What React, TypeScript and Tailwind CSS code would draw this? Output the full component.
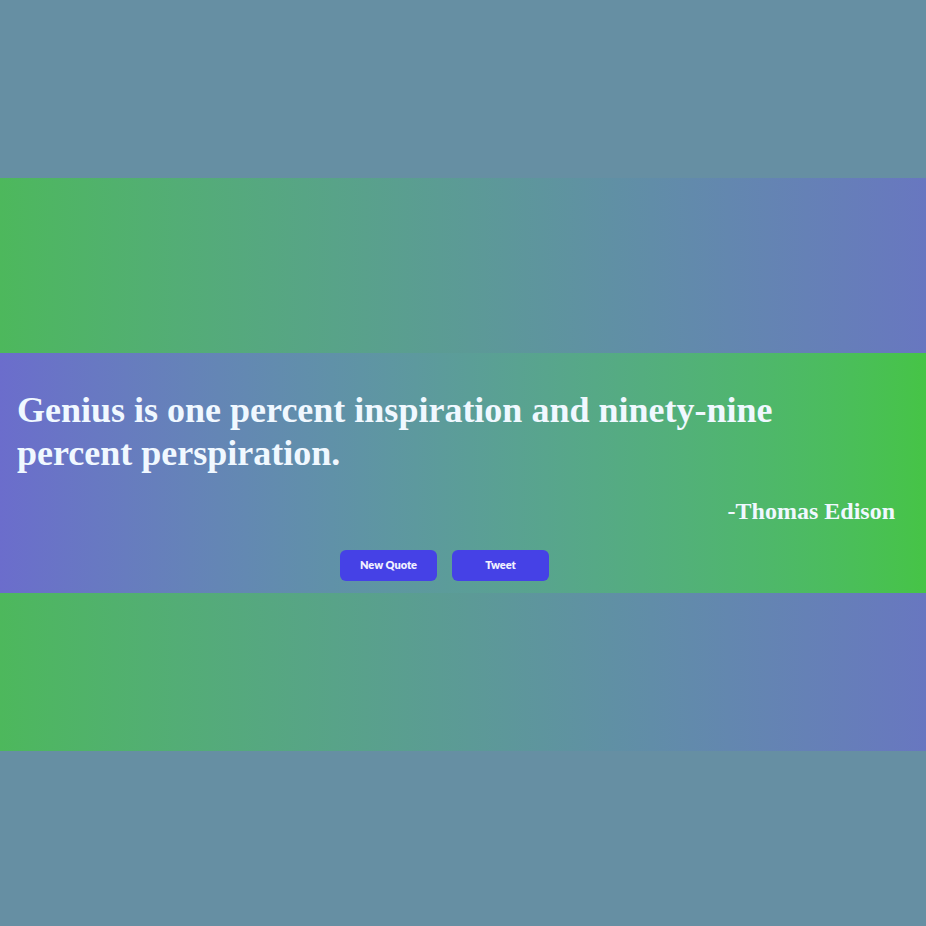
import React from "react";

export default function App() {
  return (
    <div className="w-[926px] h-[926px] bg-[#668fa3] flex flex-col">
      <div className="h-[178px]" />
      <div className="h-[175px] bg-gradient-to-r from-[#4db85c] to-[#6877c0]" />
      <div className="h-[240px] bg-gradient-to-r from-[#6b6dcc] to-[#46c446] flex flex-col">
        <p
          className="pl-[17px] pr-[60px] pt-[36px] text-[36px] leading-[43px] font-bold text-[#f0f8ff]"
          style={{ fontFamily: '"Times New Roman", "Liberation Serif", serif' }}
        >
          Genius is one percent inspiration and ninety-nine percent perspiration.
        </p>
        <p
          className="mt-[22px] pr-[31px] text-right text-[24px] leading-[28px] font-bold text-[#f0f8ff]"
          style={{ fontFamily: '"Times New Roman", "Liberation Serif", serif' }}
        >
          -Thomas Edison
        </p>
        <div className="mt-[25px] flex justify-center gap-[15px] pr-[37px]">
          <button
            className="w-[97px] h-[31px] rounded-[6px] bg-[#4541e6] text-[#f0f0ff] text-[11px] font-extrabold"
            style={{ fontFamily: "Lato, sans-serif" }}
          >
            New Quote
          </button>
          <button
            className="w-[97px] h-[31px] rounded-[6px] bg-[#4541e6] text-[#f0f0ff] text-[11px] font-extrabold"
            style={{ fontFamily: "Lato, sans-serif" }}
          >
            Tweet
          </button>
        </div>
      </div>
      <div className="h-[158px] bg-gradient-to-r from-[#4db85c] to-[#6877c0]" />
      <div className="flex-1" />
    </div>
  );
}
